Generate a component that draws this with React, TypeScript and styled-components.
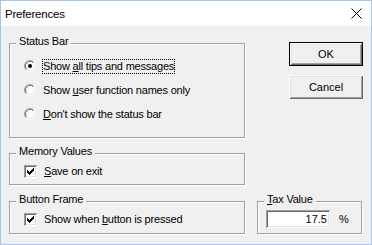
import styled, { createGlobalStyle } from 'styled-components';

const GlobalStyle = createGlobalStyle`
  html, body {
    margin: 0;
    padding: 0;
    background: #fff;
  }
  body {
    font-family: "Liberation Sans", Arial, sans-serif;
    font-size: 11px;
    color: #000;
  }
`;

const Window = styled.div`
  width: 372px;
  height: 245px;
  box-sizing: border-box;
  border: 1px solid #a6c6ea;
  background: #f0f0f0;
  display: flex;
  flex-direction: column;
`;

const TitleBar = styled.div`
  height: 25px;
  flex: none;
  background: #fff;
  display: flex;
  align-items: center;
  justify-content: space-between;
  padding-left: 4px;
  padding-right: 9px;
`;

const Title = styled.div`
  font-size: 11.5px;
  letter-spacing: -0.2px;
`;

const Client = styled.div`
  flex: 1;
  display: flex;
  padding: 17px 0 0 8px;
  gap: 12px;
`;

const LeftCol = styled.div`
  width: 236px;
  display: flex;
  flex-direction: column;
`;

const RightCol = styled.div`
  width: 106px;
  display: flex;
  flex-direction: column;
  align-items: flex-end;
  height: 191px;
`;

const Group = styled.div<{ $h: number; $mt?: number }>`
  position: relative;
  box-sizing: border-box;
  width: 100%;
  height: ${(p) => p.$h}px;
  margin-top: ${(p) => p.$mt ?? 0}px;
  border: 1px solid #a0a0a0;
  box-shadow: inset 1px 1px 0 #fff, 1px 1px 0 #fff;
`;

const Legend = styled.span`
  position: absolute;
  top: -9px;
  left: 6px;
  padding: 0 3px;
  line-height: 13px;
  background: #f0f0f0;
  white-space: nowrap;
  letter-spacing: -0.2px;
`;

const OptionList = styled.div`
  display: flex;
  flex-direction: column;
  padding: 10px 0 0 14px;
`;

const OptionRow = styled.label`
  display: flex;
  align-items: center;
  height: 24px;
  gap: 6px;
  white-space: nowrap;
`;

const CheckList = styled.div`
  padding: 9px 0 0 14px;
`;

const CheckRow = styled.label`
  display: flex;
  align-items: center;
  height: 16px;
  gap: 6px;
  white-space: nowrap;
`;

const Caption = styled.span<{ $focus?: boolean }>`
  border: 1px dotted ${(p) => (p.$focus ? '#000' : 'transparent')};
  line-height: 13px;
  letter-spacing: -0.2px;
  u {
    text-decoration: underline;
    text-underline-offset: 1px;
  }
`;

const CheckBox = styled.span`
  width: 13px;
  height: 13px;
  flex: none;
  background: #fff;
  box-shadow: inset 1px 1px 0 #a0a0a0, inset -1px -1px 0 #fff,
    inset 2px 2px 0 #696969, inset -2px -2px 0 #e3e3e3;
  svg {
    display: block;
  }
`;

const PushButton = styled.button<{ $default?: boolean; $mt?: number }>`
  width: 74px;
  height: 24px;
  margin-top: ${(p) => p.$mt ?? 0}px;
  box-sizing: border-box;
  padding: 0;
  background: #f0f0f0;
  font: inherit;
  color: #000;
  border: ${(p) => (p.$default ? '1px solid #000' : 'none')};
  box-shadow: inset 1px 1px 0 #fff, inset -1px -1px 0 #696969,
    inset 2px 2px 0 #e3e3e3, inset -2px -2px 0 #a0a0a0;
`;

const TaxGroup = styled(Group)`
  width: 105px;
  margin-top: auto;
  margin-right: 1px;
`;

const TaxRow = styled.div`
  display: flex;
  align-items: center;
  padding: 8px 0 0 8px;
  gap: 9px;
`;

const Edit = styled.div`
  width: 64px;
  height: 18px;
  box-sizing: border-box;
  background: #fff;
  padding: 0 3px 0 0;
  text-align: right;
  line-height: 18px;
  box-shadow: inset 1px 1px 0 #a0a0a0, inset -1px -1px 0 #fff,
    inset 2px 2px 0 #696969, inset -2px -2px 0 #e3e3e3;
`;

const Radio = ({ checked }: { checked?: boolean }) => (
  <svg width="12" height="12" viewBox="0 0 12 12" style={{ flex: 'none' }}>
    <circle cx="6" cy="6" r="5" fill="#fff" />
    <path d="M2.11 9.89 A5.5 5.5 0 0 1 9.89 2.11" fill="none" stroke="#a0a0a0" />
    <path d="M9.89 2.11 A5.5 5.5 0 0 1 2.11 9.89" fill="none" stroke="#fff" />
    <path d="M2.82 9.18 A4.5 4.5 0 0 1 9.18 2.82" fill="none" stroke="#696969" />
    <path d="M9.18 2.82 A4.5 4.5 0 0 1 2.82 9.18" fill="none" stroke="#e3e3e3" />
    {checked && <circle cx="6" cy="6" r="2" fill="#000" />}
  </svg>
);

const Check = () => (
  <CheckBox>
    <svg width="13" height="13" viewBox="0 0 13 13" shapeRendering="crispEdges">
      <path
        d="M9 3h1v1h-1z M8 4h2v1h-2z M3 5h1v1h-1z M7 5h3v1h-3z M3 6h2v1h-2z M6 6h3v1h-3z M3 7h5v1h-5z M4 8h3v1h-3z M5 9h1v1h-1z"
        fill="#000"
      />
    </svg>
  </CheckBox>
);

const CloseIcon = () => (
  <svg width="11" height="11" viewBox="0 0 11 11">
    <path d="M0.5 0.5 L10.5 10.5 M10.5 0.5 L0.5 10.5" stroke="#000" strokeWidth="1" />
  </svg>
);

export default function App() {
  return (
    <>
      <GlobalStyle />
      <Window>
        <TitleBar>
          <Title>Preferences</Title>
          <CloseIcon />
        </TitleBar>
        <Client>
          <LeftCol>
            <Group $h={95}>
              <Legend>Status Bar</Legend>
              <OptionList>
                <OptionRow>
                  <Radio checked />
                  <Caption $focus>
                    Show <u>a</u>ll tips and messages
                  </Caption>
                </OptionRow>
                <OptionRow>
                  <Radio />
                  <Caption>
                    Show <u>u</u>ser function names only
                  </Caption>
                </OptionRow>
                <OptionRow>
                  <Radio />
                  <Caption>
                    <u>D</u>on't show the status bar
                  </Caption>
                </OptionRow>
              </OptionList>
            </Group>
            <Group $h={32} $mt={15}>
              <Legend>Memory Values</Legend>
              <CheckList>
                <CheckRow>
                  <Check />
                  <Caption>
                    <u>S</u>ave on exit
                  </Caption>
                </CheckRow>
              </CheckList>
            </Group>
            <Group $h={33} $mt={16}>
              <Legend>Button Frame</Legend>
              <CheckList>
                <CheckRow>
                  <Check />
                  <Caption>
                    Show when <u>b</u>utton is pressed
                  </Caption>
                </CheckRow>
              </CheckList>
            </Group>
          </LeftCol>
          <RightCol>
            <PushButton $default $mt={-1}>OK</PushButton>
            <PushButton $mt={9}>Cancel</PushButton>
            <TaxGroup $h={33}>
              <Legend>
                <u>T</u>ax Value
              </Legend>
              <TaxRow>
                <Edit>17.5</Edit>
                <span>%</span>
              </TaxRow>
            </TaxGroup>
          </RightCol>
        </Client>
      </Window>
    </>
  );
}
